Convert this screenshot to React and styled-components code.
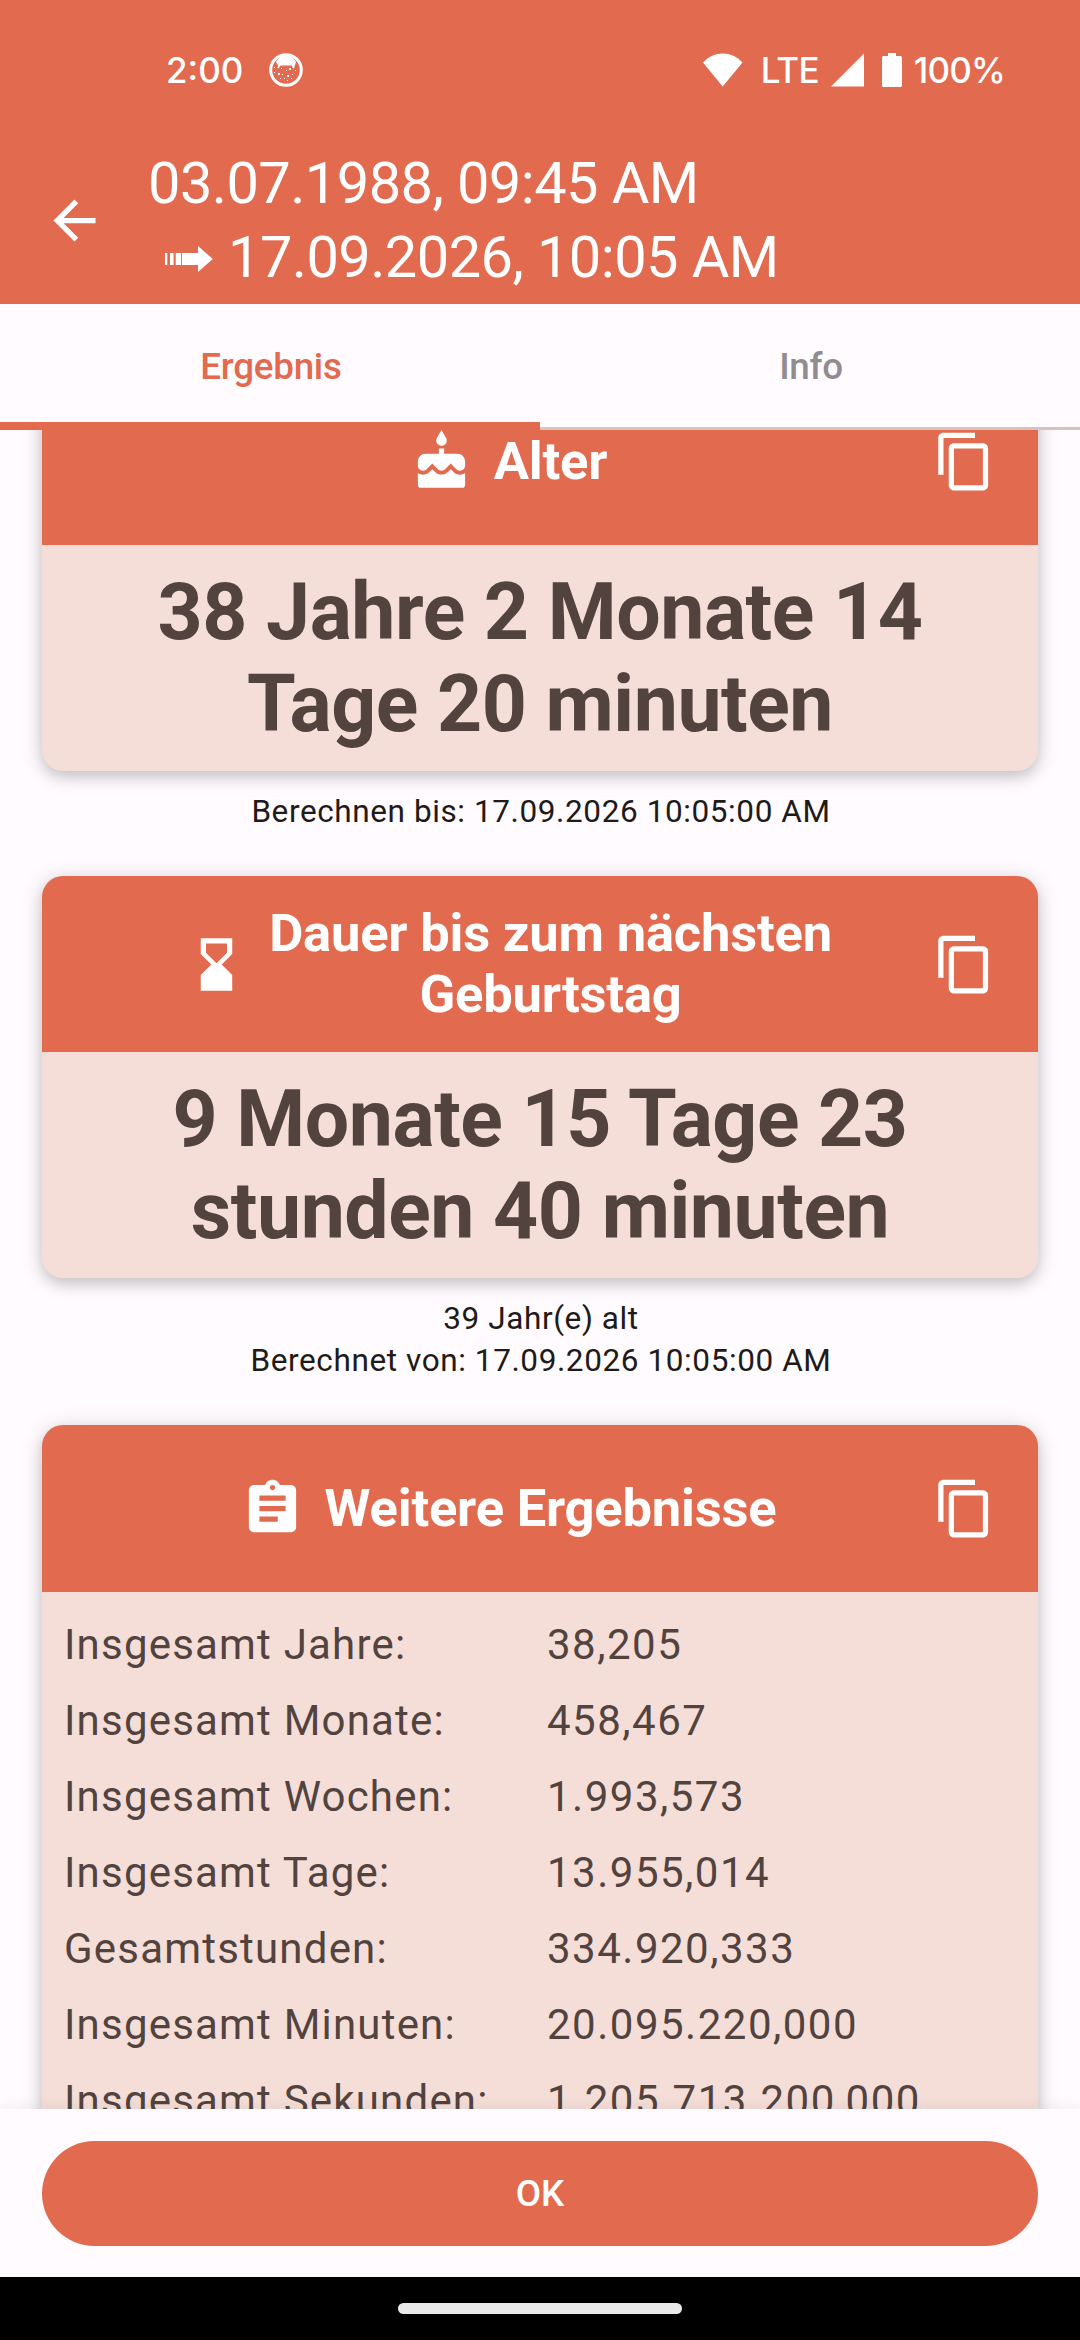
import React, { useState } from 'react'
import styled, { createGlobalStyle } from 'styled-components'
import { MdArrowBack, MdCake, MdHourglassBottom, MdAssignment, MdContentCopy } from 'react-icons/md'

const GlobalStyle = createGlobalStyle`
    * {
        box-sizing: border-box;
    }

    body {
        margin: 0;
        background: #fffbff;
        font-family: Roboto, sans-serif;
    }
`;

const Screen = styled.div`
    width: 1080px;
    height: 2340px;
    display: flex;
    flex-direction: column;
    overflow: hidden;
    background: #fffbff;

    svg {
        display: block;
        flex: none;
    }
`;

const StatusBar = styled.div`
    height: 138px;
    padding: 2px 75px 0 166px;
    display: flex;
    align-items: center;
    justify-content: space-between;
    background: #e26b4f;
    color: #fff;
    font: 500 35px Inter, sans-serif;
`;

const StatusGroup = styled.div`
    display: flex;
    align-items: center;
    gap: ${props => props.$gap}px;
`;

const StatusText = styled.span`
    letter-spacing: ${props => props.$spacing || 0}px;
`;

const AppBar = styled.header`
    height: 166px;
    padding: 0 0 2px 43px;
    display: flex;
    align-items: center;
    gap: 42px;
    background: #e26b4f;
    color: #fff;
`;

const Title = styled.h1`
    margin: 0;
    font-size: 57.75px;
    font-weight: 400;
    line-height: 74px;
    letter-spacing: -0.57px;
`;

const TitleLine = styled.div`
    display: flex;
    align-items: center;
    gap: 15px;
    padding-left: ${props => props.$indent || 0}px;
`;

const ArrowSvg = styled.svg`
    margin-top: 4px;
`;

const Tabs = styled.nav`
    flex: none;
    height: 126px;
    display: grid;
    grid-template-columns: 1fr 1fr;
    background: #fffbff;
    box-shadow: inset 0 -3px #dac2bc;
    z-index: 1;
`;

const Tab = styled.button`
    border: 0;
    border-bottom: 8px solid ${props => props.$active ? '#e26b4f' : 'transparent'};
    padding: 7px 0 0 2px;
    background: none;
    color: ${props => props.$active ? '#e26b4f' : '#908c8f'};
    font: 500 36.75px Roboto, sans-serif;
    letter-spacing: -0.25px;
`;

const Content = styled.main`
    flex: 1;
    min-height: 0;
    overflow: hidden;
    padding: 0 42px;
`;

// the list is scrolled down a little, so the first card starts under the tabs
const Results = styled.div`
    margin-top: -52px;
`;

const Card = styled.section`
    border-radius: 21px;
    overflow: hidden;
    background: #f5ded8;
    color: #53433f;
    box-shadow: 0 6px 14px rgba(0, 0, 0, 0.14), 0 3px 24px rgba(0, 0, 0, 0.14);
`;

const CardHeader = styled.div`
    min-height: 167px;
    padding: 26.5px 42px;
    display: flex;
    align-items: center;
    background: #e26b4f;
    color: #fff;
`;

const CardTitle = styled.div`
    flex: 1;
    display: flex;
    align-items: center;
    justify-content: center;
    gap: 21px;
`;

const CardName = styled.h2`
    margin: 0;
    font-size: 52.5px;
    font-weight: 700;
    line-height: 61.5px;
    letter-spacing: -0.2px;
    text-align: center;
    white-space: pre-line;
`;

const BigValue = styled.div`
    height: 226px;
    padding: 21px 42px;
    font-size: 78.75px;
    font-weight: 700;
    line-height: 92px;
    letter-spacing: -0.45px;
    text-align: center;
    white-space: pre-line;
`;

const Caption = styled.p`
    margin: 20px 0 43px;
    padding-left: 2px;
    color: #201a18;
    font-size: 31.5px;
    line-height: 42px;
    letter-spacing: 0.6px;
    text-align: center;
    white-space: pre-line;
`;

const Table = styled.div`
    padding: 14px 21px 14px 22px;
`;

const Row = styled.div`
    height: 76px;
    display: grid;
    grid-template-columns: 483px 1fr;
    align-items: center;
    font-size: 42px;
    white-space: nowrap;
`;

const Label = styled.span`
    letter-spacing: 1.2px;
`;

const Value = styled.span`
    letter-spacing: 1.5px;
`;

const Footer = styled.footer`
    flex: none;
    height: 168px;
    padding: 32px 42px;
    background: #fffbff;
    box-shadow: 0 0 16px rgba(0, 0, 0, 0.08);
    z-index: 1;
`;

const OkButton = styled.button`
    width: 100%;
    height: 105px;
    border: 0;
    border-radius: 53px;
    background: #e26b4f;
    color: #fff;
    font: 500 36.75px Roboto, sans-serif;
`;

const NavBar = styled.div`
    flex: none;
    height: 63px;
    display: flex;
    align-items: center;
    justify-content: center;
    background: #000;
    z-index: 1;
`;

const NavHandle = styled.div`
    width: 284px;
    height: 11px;
    border-radius: 6px;
    background: #ebebeb;
`;

const totals = [
    ['Insgesamt Jahre:', '38,205'],
    ['Insgesamt Monate:', '458,467'],
    ['Insgesamt Wochen:', '1.993,573'],
    ['Insgesamt Tage:', '13.955,014'],
    ['Gesamtstunden:', '334.920,333'],
    ['Insgesamt Minuten:', '20.095.220,000'],
    ['Insgesamt Sekunden:', '1.205.713.200,000'],
]

function CookieIcon() {
    return (
        <svg width="34" height="34" viewBox="0 0 34 34" fill="#fff">
            <circle cx="17" cy="17" r="15.300" fill="none" stroke="#fff" strokeWidth="3" />
            <path d="M7 9C10 4 13 2.500 17 2.500S24 4 27 9L26 12 25 15.500 23.500 15 23 12.500H11.500L9.500 15.500 8.500 15 9 12Z" />
            <path d="M5 14h1v1H5zM12 15h1v1h-1zM17 17h1v1h-1zM20 15h2v2h-2zM26 17h1v1h-1zM5 19h1v1H5zM9 20h2v2H9zM13 21h1v1h-1zM18 22h2v2h-2zM23 21h1v1h-1zM11 25h1v1h-1zM15 25h1v1h-1zM18 27h1v1h-1zM22 25h1v1h-1z" />
        </svg>
    );
}

function DashedArrow() {
    return (
        <ArrowSvg width="48" height="28" viewBox="0 0 48 28" fill="#fff">
            <path d="M0 8h2.300v12H0zM5 8h3.600v12H5zM10.700 8h5.300v12h-5.300zM16.900 8H33V1L47.800 14 33 27V20H16.900z" />
        </ArrowSvg>
    );
}

function ResultHeader({ icon: Icon, name }) {
    return (
        <CardHeader>
            <CardTitle>
                <Icon size={63} />
                <CardName>{name}</CardName>
            </CardTitle>
            <MdContentCopy size={63} />
        </CardHeader>
    );
}

function App() {

    const [tab, setTab] = useState('result')

    return (
        <Screen>
            <GlobalStyle />
            <StatusBar>
                <StatusGroup $gap={26}>
                    <StatusText>2:00</StatusText>
                    <CookieIcon />
                </StatusGroup>
                <StatusGroup $gap={12}>
                    <svg width="46" height="34" viewBox="0 0 46 34" fill="#fff">
                        <path d="M0 9.500C11 -2.500 28.500 -2.500 39.500 9.500L19.700 33.500Z" />
                    </svg>
                    <StatusText $spacing={-0.8}>LTE</StatusText>
                    <svg width="39" height="34" viewBox="0 0 39 34" fill="#fff">
                        <path d="M0 33.500L33 0.500V33.500Z" />
                    </svg>
                    <svg width="20" height="34" viewBox="0 0 20 34" fill="#fff">
                        <path d="M6 0h8v3h4.500q1.500 0 1.500 1.500v28q0 1.500-1.500 1.500h-17q-1.500 0-1.500-1.500v-28q0-1.500 1.500-1.500H6z" />
                    </svg>
                    <StatusText $spacing={-0.8}>100%</StatusText>
                </StatusGroup>
            </StatusBar>
            <AppBar>
                <MdArrowBack size={63} />
                <Title>
                    <TitleLine>03.07.1988, 09:45 AM</TitleLine>
                    <TitleLine $indent={17}><DashedArrow />17.09.2026, 10:05 AM</TitleLine>
                </Title>
            </AppBar>
            <Tabs>
                <Tab $active={tab === 'result'} onClick={() => setTab('result')}>Ergebnis</Tab>
                <Tab $active={tab === 'info'} onClick={() => setTab('info')}>Info</Tab>
            </Tabs>
            <Content>
                <Results>
                    <Card>
                        <ResultHeader icon={MdCake} name="Alter" />
                        <BigValue>{'38 Jahre 2 Monate 14\nTage 20 minuten'}</BigValue>
                    </Card>
                    <Caption>Berechnen bis: 17.09.2026 10:05:00 AM</Caption>
                    <Card>
                        <ResultHeader icon={MdHourglassBottom} name={'Dauer bis zum nächsten\nGeburtstag'} />
                        <BigValue>{'9 Monate 15 Tage 23\nstunden 40 minuten'}</BigValue>
                    </Card>
                    <Caption>{'39 Jahr(e) alt\nBerechnet von: 17.09.2026 10:05:00 AM'}</Caption>
                    <Card>
                        <ResultHeader icon={MdAssignment} name="Weitere Ergebnisse" />
                        <Table>
                            {totals.map(([label, value]) => (
                                <Row key={label}>
                                    <Label>{label}</Label>
                                    <Value>{value}</Value>
                                </Row>
                            ))}
                        </Table>
                    </Card>
                </Results>
            </Content>
            <Footer>
                <OkButton>OK</OkButton>
            </Footer>
            <NavBar>
                <NavHandle />
            </NavBar>
        </Screen>
    );
}

export default App;
